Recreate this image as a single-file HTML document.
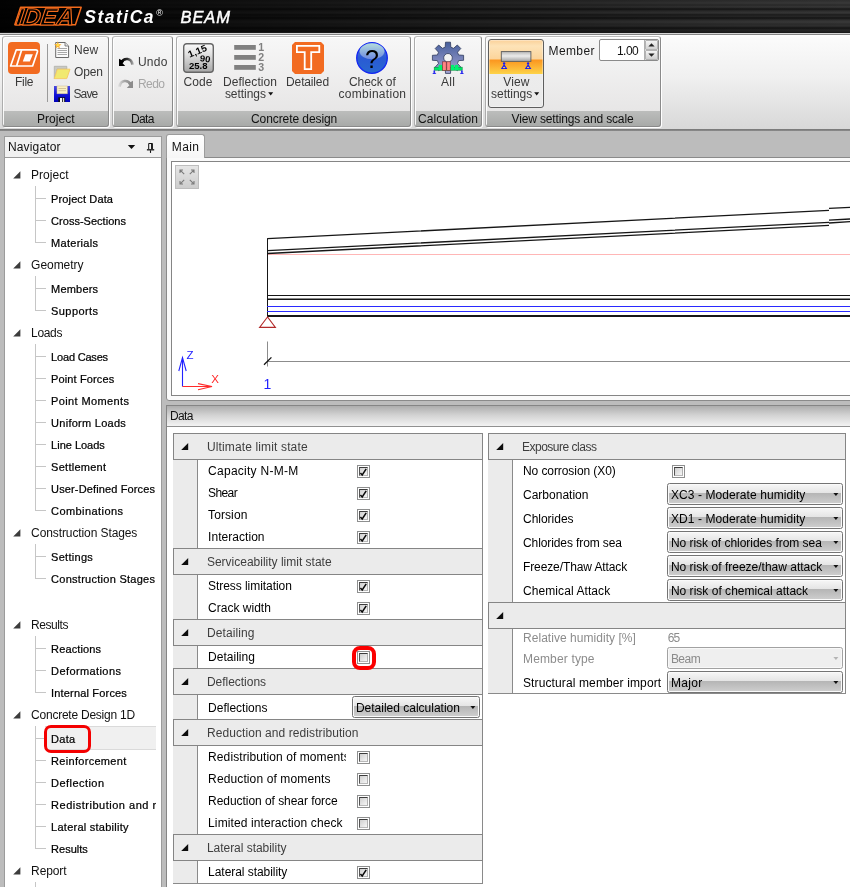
<!DOCTYPE html>
<html><head><meta charset="utf-8"><title>IDEA StatiCa BEAM</title>
<style>

html,body{margin:0;padding:0;}
body{width:850px;height:887px;overflow:hidden;position:relative;background:#bcbcbc;font-family:"Liberation Sans",sans-serif;font-size:12px;line-height:12px;color:#000;}
#app{position:absolute;left:0;top:0;width:850px;height:887px;overflow:hidden;will-change:transform;}
.a{position:absolute;box-sizing:border-box;}
.t{position:absolute;white-space:nowrap;font-size:12px;line-height:12px;}
svg{position:absolute;overflow:visible;}
.grp{position:absolute;box-sizing:border-box;border:1px solid;border-color:#bdbdbd #8a8a8a #8a8a8a #adadad;border-radius:3px;box-shadow:1px 1px 0 #fff,inset 1px 1px 0 rgba(255,255,255,0.9);background:linear-gradient(#f7f7f7,#e7e6e6 74px,#bcbdbc 74px,#a8aaa8);}
.hd{position:absolute;box-sizing:border-box;background:#ebebeb;border:1px solid #858585;}
.ind{position:absolute;box-sizing:border-box;background:#ebebeb;border-right:1px solid #8a8a8a;}
.dd{position:absolute;box-sizing:border-box;border:1px solid #747474;border-radius:2.5px;box-shadow:inset 0 0 0 1px #fafafa;background:linear-gradient(#f7f7f7 0,#e4e4e4 46%,#b5b5b5 46%,#cfcfcf 100%);}
.ddd{position:absolute;box-sizing:border-box;border:1px solid #a2a2a2;border-radius:2.5px;background:#efefef;box-shadow:inset 0 0 0 1px #f8f8f8;}
.cb{position:absolute;box-sizing:border-box;width:13px;height:13px;border:1px solid #8e8f8f;background:#fff;}
.cb i{position:absolute;left:1px;top:1px;width:9px;height:9px;box-sizing:border-box;border:1px solid;border-color:#3c3c3c #b0b0b0 #b8b8b8 #555;background:linear-gradient(135deg,#cfcfcf,#f6f6f6);}

</style></head><body><div id="app">
<div class="a" style="left:0px;top:0px;width:850px;height:33px;background:linear-gradient(90deg,rgba(0,0,0,0.96),rgba(0,0,0,0.5) 47%,rgba(0,0,0,0.08) 88%,rgba(0,0,0,0) 100%),linear-gradient(180deg,#2e2e2e 0px,#343434 2px,#3a3a3a 3px,#2a2a2a 5px,#383838 7px,#161616 9px,#2e2e2e 11px,#383838 13px,#181818 15px,#2c2c2c 16px,#141414 18px,#2e2e2e 20px,#3a3a3a 22px,#2c2c2c 24px,#303030 26px,#141414 28px,#262626 30px,#1a1a1a 33px);"></div>
<div class="a" style="left:0px;top:32px;width:850px;height:1px;background:#181818;"></div>
<div class="a" style="left:0px;top:33px;width:850px;height:1px;background:#d4d4d4;"></div>
<div class="a" style="left:0px;top:34px;width:850px;height:1px;background:#868686;"></div>
<svg style="left:0;top:0" width="240" height="33"><polygon points="20.6,7.2 81.2,7.2 75.4,24.8 14.8,24.8" fill="#000" stroke="#f26a1b" stroke-width="1.5" stroke-linejoin="round"/>
<g transform="translate(15.6,24.6) skewX(-7)"><text x="0" y="0" font-family="Liberation Sans, sans-serif" font-weight="bold" font-style="italic" font-size="23.6" textLength="58" lengthAdjust="spacingAndGlyphs" fill="#000" stroke="#f26a1b" stroke-width="1.1">IDEA</text></g></svg>
<span class="t" style="left:84.3px;top:8.7px;letter-spacing:1.50px;font-size:17.5px;line-height:17.5px;color:#fff;font-weight:bold;font-style:italic;">StatiCa</span>
<span class="t" style="left:156.3px;top:8.7px;font-size:9px;line-height:9px;color:#fff;">®</span>
<span class="t" style="left:180.5px;top:8.7px;letter-spacing:0.91px;font-size:16.5px;line-height:16.5px;color:#fff;font-style:italic;-webkit-text-stroke:0.45px #fff;">BEAM</span>
<div class="a" style="left:0px;top:35px;width:850px;height:94px;background:linear-gradient(#fff,#fbfbfb 2px,#f0f0f0 45%,#d8d8d8);"></div>
<div class="a" style="left:0px;top:129px;width:850px;height:2px;background:linear-gradient(#777,#8c8c8c);"></div>
<div class="grp" style="left:2px;top:36px;width:107px;height:91px"></div>
<div class="grp" style="left:112px;top:36px;width:61px;height:91px"></div>
<div class="grp" style="left:176px;top:36px;width:235px;height:91px"></div>
<div class="grp" style="left:414px;top:36px;width:68px;height:91px"></div>
<div class="grp" style="left:485px;top:36px;width:176px;height:91px"></div>
<svg style="left:8px;top:42px" width="32" height="32" viewBox="0 0 32 32"><rect width="32" height="32" rx="4" fill="#f26b21"/>
<path d="M8.3,7.8 H27.6 Q30.2,7.8 29.3,10.2 L24.6,24 H2.6 Z" fill="none" stroke="#fff" stroke-width="1.7" stroke-linejoin="round"/>
<path d="M13.6,8 L8.6,24" stroke="#fff" stroke-width="1.7"/>
<polygon points="17.4,12.2 24.9,12.2 21.8,19.6 14.8,19.6" fill="#fff"/></svg>
<span class="t" style="left:15.0px;top:75.8px;letter-spacing:-0.28px;color:#3a3a3a;">File</span>
<div class="a" style="left:47px;top:44px;width:1px;height:58px;background:#9a9a9a;"></div>
<svg style="left:54px;top:41px" width="17" height="18" viewBox="0 0 17 18">
<path d="M1.7,1.5 H11 L14.6,5 V16.5 H1.7 Z" fill="#fbfbfb" stroke="#6a6a6a" stroke-width="1"/>
<path d="M11,1.5 V5 H14.6" fill="#e4e4e4" stroke="#6a6a6a" stroke-width="0.8"/>
<path d="M3.5,7.5 H13 M3.5,9.5 H13 M3.5,11.5 H13 M3.5,13.5 H13" stroke="#a8a8a8" stroke-width="1"/>
<path d="M3.8,0.2 L4.7,2.9 L7.6,3.4 L5.3,5 L6,7.8 L3.8,6.1 L1.4,7.6 L2.3,4.9 L0,3.3 L2.9,3 Z" fill="#fbb034"/><circle cx="3.8" cy="4" r="1.3" fill="#ffe24a"/></svg>
<span class="t" style="left:73.9px;top:43.9px;letter-spacing:0.15px;color:#3a3a3a;">New</span>
<svg style="left:53px;top:65px" width="18" height="15" viewBox="0 0 18 15">
<path d="M1.3,1.3 H13.8 V4 H4 L1.3,13.5 Z" fill="#c9c9c3" stroke="#b0b0a8" stroke-width="0.8"/>
<polygon points="4.4,4.2 17,4.2 13.8,13.6 1.3,13.6" fill="#f1e96f" stroke="#f6c860" stroke-width="0.9"/></svg>
<span class="t" style="left:73.9px;top:65.9px;letter-spacing:-0.09px;color:#3a3a3a;">Open</span>
<svg style="left:54px;top:86px" width="16" height="16" viewBox="0 0 16 16"><defs><linearGradient id="sv" x1="0" y1="0" x2="0" y2="1"><stop offset="0" stop-color="#4a4ae0"/><stop offset="0.5" stop-color="#1414d8"/><stop offset="1" stop-color="#0000b8"/></linearGradient></defs>
<rect x="0" y="0" width="16" height="16" fill="url(#sv)"/>
<rect x="3" y="0" width="10.3" height="7.8" fill="#fbf0c4" stroke="#c9b98a" stroke-width="0.5"/>
<path d="M4.5,2.5 H12 M4.5,4.7 H12" stroke="#c8b98c" stroke-width="0.8"/>
<rect x="4.3" y="11.3" width="6.8" height="4.7" fill="#111"/><rect x="6" y="12" width="2.2" height="4" fill="#f4f4f4"/><rect x="9" y="12" width="1.2" height="4" fill="#ddd"/></svg>
<span class="t" style="left:73.5px;top:88.2px;letter-spacing:-0.88px;color:#3a3a3a;">Save</span>
<span class="t" style="left:37.0px;top:113.1px;letter-spacing:0.03px;color:#111;">Project</span>
<svg style="left:118px;top:56px" width="16" height="11" viewBox="0 0 16 11"><defs><linearGradient id="ug" x1="0" y1="0" x2="1" y2="0"><stop offset="0" stop-color="#000"/><stop offset="0.55" stop-color="#333"/><stop offset="1" stop-color="#999"/></linearGradient></defs>
<path d="M3.5,6.2 C6,1.6 13.6,1.6 14.4,8.6" fill="none" stroke="url(#ug)" stroke-width="2.6"/>
<polygon points="1,2.8 1,10 7.2,10 4.6,7.2 6,5.4" fill="#000"/></svg>
<span class="t" style="left:137.9px;top:56.4px;letter-spacing:0.27px;color:#3a3a3a;">Undo</span>
<svg style="left:118px;top:78px" width="16" height="11" viewBox="0 0 16 11"><defs><linearGradient id="rg" x1="1" y1="0" x2="0" y2="0"><stop offset="0" stop-color="#8c8c8c"/><stop offset="0.6" stop-color="#a8a8a8"/><stop offset="1" stop-color="#d4d4d4"/></linearGradient></defs>
<path d="M12.5,6.2 C10,1.6 2.4,1.6 1.6,8.6" fill="none" stroke="url(#rg)" stroke-width="2.6"/>
<polygon points="15,2.8 15,10 8.8,10 11.4,7.2 10,5.4" fill="#8c8c8c"/></svg>
<span class="t" style="left:137.9px;top:78.1px;letter-spacing:-0.53px;color:#a6a6a6;">Redo</span>
<span class="t" style="left:131.0px;top:113.1px;letter-spacing:-0.62px;color:#111;">Data</span>
<svg style="left:183px;top:43px" width="31" height="30" viewBox="0 0 31 30"><defs><linearGradient id="cg" x1="0" y1="0" x2="0" y2="1"><stop offset="0" stop-color="#fafafa"/><stop offset="0.35" stop-color="#e2e2e2"/><stop offset="1" stop-color="#a6a6a6"/></linearGradient></defs>
<rect x="0.7" y="0.7" width="29.6" height="28.6" rx="3" fill="url(#cg)" stroke="#666" stroke-width="1.4"/>
<g font-family="Liberation Sans, sans-serif" font-weight="bold" fill="#000">
<text x="6.6" y="14.8" font-size="9.4" transform="rotate(-22 6.6 14.8)" textLength="19.4" lengthAdjust="spacingAndGlyphs">1,15</text>
<text x="16.6" y="17.9" font-size="8.6" transform="rotate(8 16.6 17.9)" textLength="10.6" lengthAdjust="spacingAndGlyphs">90</text>
<text x="6" y="25.8" font-size="8.4" textLength="18.6" lengthAdjust="spacingAndGlyphs">25.8</text></g></svg>
<span class="t" style="left:183.5px;top:75.8px;letter-spacing:0.10px;color:#3a3a3a;">Code</span>
<svg style="left:232px;top:42px" width="34" height="30" viewBox="0 0 34 30"><g fill="#808080"><rect x="2.2" y="3" width="21.6" height="4.8"/><rect x="2.2" y="13" width="21.6" height="4.8"/><rect x="2.2" y="23" width="21.6" height="4.8"/></g>
<g font-family="Liberation Sans, sans-serif" font-weight="bold" font-size="10.6" fill="#808080"><text x="26.2" y="9.2">1</text><text x="26.2" y="19.2">2</text><text x="26.2" y="29.2">3</text></g></svg>
<span class="t" style="left:222.9px;top:75.8px;letter-spacing:0.08px;color:#3a3a3a;">Deflection</span>
<span class="t" style="left:224.9px;top:87.9px;letter-spacing:-0.04px;color:#3a3a3a;">settings</span>
<svg style="left:268px;top:92px" width="6" height="4"><polygon points="0.2,0.2 5.2,0.2 2.7,3.4" fill="#111"/></svg>
<svg style="left:292px;top:42px" width="32" height="32" viewBox="0 0 32 32"><path d="M3,0 H29 L32,3 V29 L29,32 H3 L0,29 V3 Z" fill="#f26b21"/>
<path d="M4.9,3.9 H27.3 V10.1 H19.2 V27.2 H12.7 V10.1 H4.9 Z" fill="none" stroke="#fff" stroke-width="1.8"/></svg>
<span class="t" style="left:286.1px;top:76.0px;letter-spacing:-0.15px;color:#3a3a3a;">Detailed</span>
<svg style="left:356px;top:42px" width="32" height="32" viewBox="0 0 32 32"><defs><linearGradient id="qg" x1="0" y1="0" x2="0" y2="1"><stop offset="0" stop-color="#5a7ae0"/><stop offset="0.5" stop-color="#2a5ad4"/><stop offset="1" stop-color="#2868d0"/></linearGradient>
<linearGradient id="qh" x1="0" y1="0" x2="0" y2="1"><stop offset="0" stop-color="#b4dcdc"/><stop offset="1" stop-color="#6c88e0"/></linearGradient></defs>
<circle cx="16" cy="16" r="15.3" fill="url(#qg)" stroke="#1226f2" stroke-width="1.3"/>
<ellipse cx="16" cy="9.3" rx="12.4" ry="8" fill="url(#qh)"/>
<text x="16" y="25.6" text-anchor="middle" font-family="Liberation Sans, sans-serif" font-size="25" fill="#000">?</text></svg>
<span class="t" style="left:349.0px;top:76.0px;letter-spacing:-0.08px;color:#3a3a3a;">Check of</span>
<span class="t" style="left:338.5px;top:88.0px;letter-spacing:0.28px;color:#3a3a3a;">combination</span>
<span class="t" style="left:251.0px;top:113.1px;letter-spacing:-0.08px;color:#111;">Concrete design</span>
<svg style="left:432px;top:42px" width="32" height="32" viewBox="0 0 32 32"><defs><linearGradient id="gg" x1="0" y1="0" x2="0" y2="1"><stop offset="0" stop-color="#465f9c"/><stop offset="1" stop-color="#a6a4d4"/></linearGradient></defs>
<polygon points="13.2,5.2 13.5,0.2 18.5,0.2 18.8,5.2 21.6,6.3 25.3,3.0 28.8,6.5 25.5,10.2 26.6,13.0 31.6,13.3 31.6,18.3 26.6,18.6 25.5,21.4 28.8,25.1 25.3,28.6 21.6,25.3 18.8,26.4 18.5,31.4 13.5,31.4 13.2,26.4 10.4,25.3 6.7,28.6 3.2,25.1 6.5,21.4 5.4,18.6 0.4,18.3 0.4,13.3 5.4,13.0 6.5,10.2 3.2,6.5 6.7,3.0 10.4,6.3" fill="url(#gg)" stroke="#2e3a5c" stroke-width="0.8" stroke-linejoin="round"/>
<circle cx="16" cy="15.8" r="4.3" fill="#f2f2f2" stroke="#2e3a5c" stroke-width="0.8"/>
<rect x="2.2" y="25.2" width="28" height="3" fill="#00e868" stroke="#0a8a3c" stroke-width="0.6"/>
<rect x="6.6" y="22.9" width="3.6" height="5.2" fill="#00f070"/><rect x="18.8" y="22.9" width="3.4" height="5.2" fill="#00f070"/><rect x="23" y="22.9" width="3.4" height="5.2" fill="#00f070"/>
<rect x="10.6" y="19.8" width="3.6" height="8.6" fill="#ff8484" stroke="#7a2a2a" stroke-width="0.6"/><rect x="14.8" y="19.8" width="3.4" height="8.6" fill="#ff8484" stroke="#7a2a2a" stroke-width="0.6"/>
<g fill="#2a2af0"><circle cx="2.3" cy="29.2" r="0.9"/><path d="M2.3,29.4 L0.3,32 H4.3 Z"/><circle cx="29.9" cy="29.2" r="0.9"/><path d="M29.9,29.4 L27.9,32 H31.9 Z"/></g></svg>
<span class="t" style="left:441.1px;top:76.0px;letter-spacing:0.23px;color:#3a3a3a;">All</span>
<span class="t" style="left:418.0px;top:113.1px;letter-spacing:0.06px;color:#111;">Calculation</span>
<div class="a" style="left:488px;top:39px;width:56px;height:69px;border:1px solid #5e5e5e;border-radius:3px;background:linear-gradient(#fbd199 0,#fde3b8 6px,#fcd49a 19px,#fb961f 20px,#fcb838 28px,#fdd348 34px,#ececec 34px,#eaeaea 100%);box-shadow:inset 0 0 0 1px rgba(255,255,255,0.35);"></div>
<svg style="left:498px;top:50px" width="36" height="21" viewBox="0 0 36 21"><defs><linearGradient id="bg" x1="0" y1="0" x2="0" y2="1"><stop offset="0" stop-color="#b8b8b8"/><stop offset="0.45" stop-color="#ebebeb"/><stop offset="1" stop-color="#a2a2a2"/></linearGradient></defs>
<rect x="3.3" y="1.6" width="29.6" height="9.8" fill="url(#bg)" stroke="#5c5c5c" stroke-width="0.9"/>
<g fill="#1c1cf0"><circle cx="6.1" cy="13.4" r="1.2"/><path d="M6.1,14 L2.8,19 H9.4 Z"/><circle cx="30.1" cy="13.4" r="1.2"/><path d="M30.1,14 L26.8,19 H33.4 Z"/></g>
<g fill="#fbd048"><ellipse cx="6.1" cy="17.5" rx="1.2" ry="0.7"/><ellipse cx="30.1" cy="17.5" rx="1.2" ry="0.7"/></g></svg>
<span class="t" style="left:503.3px;top:76.0px;letter-spacing:0.10px;color:#3a3a3a;">View</span>
<span class="t" style="left:491.0px;top:88.0px;letter-spacing:-0.01px;color:#3a3a3a;">settings</span>
<svg style="left:534px;top:92px" width="6" height="4"><polygon points="0.2,0.2 5.2,0.2 2.7,3.4" fill="#111"/></svg>
<span class="t" style="left:548.5px;top:45.2px;letter-spacing:0.40px;color:#1a1a1a;">Member</span>
<div class="a" style="left:599px;top:39px;width:60px;height:22px;border:1px solid #8a8a8a;border-radius:2px;background:#fff;"></div>
<div class="a" style="left:644px;top:40px;width:1px;height:20px;background:#b0b0b0;"></div>
<div class="a" style="left:645px;top:40px;width:13px;height:10px;background:linear-gradient(#f4f4f4,#d2d2d2);border:1px solid #b4b4b4;border-radius:1px;"></div>
<div class="a" style="left:645px;top:50px;width:13px;height:10px;background:linear-gradient(#f4f4f4,#cfcfcf);border:1px solid #b4b4b4;border-radius:1px;"></div>
<svg style="left:648px;top:43px" width="8" height="16"><polygon points="3.5,0.3 6.6,3.6 0.4,3.6" fill="#222"/><polygon points="0.4,10.4 6.6,10.4 3.5,13.7" fill="#222"/></svg>
<span class="t" style="left:616.9px;top:45.2px;letter-spacing:-0.49px;color:#111;">1.00</span>
<span class="t" style="left:511.5px;top:113.1px;letter-spacing:-0.14px;color:#111;">View settings and scale</span>
<div class="a" style="left:4px;top:136px;width:158px;height:760px;border:1px solid #9b9b9b;background:#fff;"></div>
<div class="a" style="left:5px;top:137px;width:156px;height:20px;background:#f1f1f1;"></div>
<div class="a" style="left:5px;top:157px;width:156px;height:1px;background:#9b9b9b;"></div>
<span class="t" style="left:8.0px;top:141.3px;letter-spacing:0.14px;color:#111;">Navigator</span>
<svg style="left:127px;top:144px" width="9" height="6"><polygon points="0.8,0.9 8.2,0.9 4.5,5.1" fill="#111"/></svg>
<svg style="left:146px;top:142px" width="10" height="12" viewBox="0 0 10 12"><path d="M2.7,7 V1.5 H6 V7" fill="none" stroke="#111" stroke-width="1"/><path d="M6,1.2 V7.2" stroke="#111" stroke-width="1.7"/><path d="M0.9,7.8 H8.2" stroke="#111" stroke-width="1.3"/><path d="M4.5,8.3 V10.9" stroke="#111" stroke-width="1.1"/></svg>
<svg style="left:13px;top:171px" width="8" height="8"><polygon points="7.4,0.2 7.4,7.4 0.2,7.4" fill="#3c3c3c"/></svg>
<span class="t" style="left:31.1px;top:168.8px;letter-spacing:0.01px;color:#111;">Project</span>
<div class="a" style="left:36px;top:198px;width:10px;height:1px;background:#c6c6c6;"></div>
<span class="t" style="left:51.1px;top:194.4px;letter-spacing:0.12px;font-size:11px;line-height:11px;color:#000;-webkit-text-stroke:0.22px #000;">Project Data</span>
<div class="a" style="left:36px;top:220px;width:10px;height:1px;background:#c6c6c6;"></div>
<span class="t" style="left:51.1px;top:216.4px;letter-spacing:0.02px;font-size:11px;line-height:11px;color:#000;-webkit-text-stroke:0.22px #000;">Cross-Sections</span>
<div class="a" style="left:36px;top:242px;width:10px;height:1px;background:#c6c6c6;"></div>
<span class="t" style="left:51.1px;top:238.4px;letter-spacing:0.27px;font-size:11px;line-height:11px;color:#000;-webkit-text-stroke:0.22px #000;">Materials</span>
<div class="a" style="left:35px;top:186px;width:1px;height:57px;background:#c6c6c6;"></div>
<svg style="left:13px;top:261px" width="8" height="8"><polygon points="7.4,0.2 7.4,7.4 0.2,7.4" fill="#3c3c3c"/></svg>
<span class="t" style="left:31.1px;top:258.8px;letter-spacing:-0.05px;color:#111;">Geometry</span>
<div class="a" style="left:36px;top:288px;width:10px;height:1px;background:#c6c6c6;"></div>
<span class="t" style="left:51.1px;top:284.4px;letter-spacing:0.18px;font-size:11px;line-height:11px;color:#000;-webkit-text-stroke:0.22px #000;">Members</span>
<div class="a" style="left:36px;top:310px;width:10px;height:1px;background:#c6c6c6;"></div>
<span class="t" style="left:51.1px;top:306.4px;letter-spacing:0.41px;font-size:11px;line-height:11px;color:#000;-webkit-text-stroke:0.22px #000;">Supports</span>
<div class="a" style="left:35px;top:276px;width:1px;height:35px;background:#c6c6c6;"></div>
<svg style="left:13px;top:329px" width="8" height="8"><polygon points="7.4,0.2 7.4,7.4 0.2,7.4" fill="#3c3c3c"/></svg>
<span class="t" style="left:31.1px;top:326.8px;letter-spacing:-0.35px;color:#111;">Loads</span>
<div class="a" style="left:36px;top:356px;width:10px;height:1px;background:#c6c6c6;"></div>
<span class="t" style="left:51.1px;top:352.4px;letter-spacing:-0.19px;font-size:11px;line-height:11px;color:#000;-webkit-text-stroke:0.22px #000;">Load Cases</span>
<div class="a" style="left:36px;top:378px;width:10px;height:1px;background:#c6c6c6;"></div>
<span class="t" style="left:51.1px;top:374.4px;letter-spacing:0.12px;font-size:11px;line-height:11px;color:#000;-webkit-text-stroke:0.22px #000;">Point Forces</span>
<div class="a" style="left:36px;top:400px;width:10px;height:1px;background:#c6c6c6;"></div>
<span class="t" style="left:51.1px;top:396.4px;letter-spacing:0.37px;font-size:11px;line-height:11px;color:#000;-webkit-text-stroke:0.22px #000;">Point Moments</span>
<div class="a" style="left:36px;top:422px;width:10px;height:1px;background:#c6c6c6;"></div>
<span class="t" style="left:51.1px;top:418.4px;letter-spacing:0.27px;font-size:11px;line-height:11px;color:#000;-webkit-text-stroke:0.22px #000;">Uniform Loads</span>
<div class="a" style="left:36px;top:444px;width:10px;height:1px;background:#c6c6c6;"></div>
<span class="t" style="left:51.1px;top:440.4px;letter-spacing:-0.01px;font-size:11px;line-height:11px;color:#000;-webkit-text-stroke:0.22px #000;">Line Loads</span>
<div class="a" style="left:36px;top:466px;width:10px;height:1px;background:#c6c6c6;"></div>
<span class="t" style="left:51.1px;top:462.4px;letter-spacing:0.26px;font-size:11px;line-height:11px;color:#000;-webkit-text-stroke:0.22px #000;">Settlement</span>
<div class="a" style="left:36px;top:488px;width:10px;height:1px;background:#c6c6c6;"></div>
<span class="t" style="left:51.1px;top:484.4px;letter-spacing:0.13px;font-size:11px;line-height:11px;color:#000;-webkit-text-stroke:0.22px #000;">User-Defined Forces</span>
<div class="a" style="left:36px;top:510px;width:10px;height:1px;background:#c6c6c6;"></div>
<span class="t" style="left:51.1px;top:506.4px;letter-spacing:0.42px;font-size:11px;line-height:11px;color:#000;-webkit-text-stroke:0.22px #000;">Combinations</span>
<div class="a" style="left:35px;top:344px;width:1px;height:167px;background:#c6c6c6;"></div>
<svg style="left:13px;top:529px" width="8" height="8"><polygon points="7.4,0.2 7.4,7.4 0.2,7.4" fill="#3c3c3c"/></svg>
<span class="t" style="left:31.1px;top:526.8px;letter-spacing:-0.10px;color:#111;">Construction Stages</span>
<div class="a" style="left:36px;top:556px;width:10px;height:1px;background:#c6c6c6;"></div>
<span class="t" style="left:51.1px;top:552.4px;letter-spacing:0.28px;font-size:11px;line-height:11px;color:#000;-webkit-text-stroke:0.22px #000;">Settings</span>
<div class="a" style="left:36px;top:578px;width:10px;height:1px;background:#c6c6c6;"></div>
<span class="t" style="left:51.1px;top:574.4px;letter-spacing:0.27px;font-size:11px;line-height:11px;color:#000;-webkit-text-stroke:0.22px #000;">Construction Stages</span>
<div class="a" style="left:35px;top:544px;width:1px;height:35px;background:#c6c6c6;"></div>
<svg style="left:13px;top:621px" width="8" height="8"><polygon points="7.4,0.2 7.4,7.4 0.2,7.4" fill="#3c3c3c"/></svg>
<span class="t" style="left:31.1px;top:618.8px;letter-spacing:-0.44px;color:#111;">Results</span>
<div class="a" style="left:36px;top:648px;width:10px;height:1px;background:#c6c6c6;"></div>
<span class="t" style="left:51.1px;top:644.4px;letter-spacing:0.12px;font-size:11px;line-height:11px;color:#000;-webkit-text-stroke:0.22px #000;">Reactions</span>
<div class="a" style="left:36px;top:670px;width:10px;height:1px;background:#c6c6c6;"></div>
<span class="t" style="left:51.1px;top:666.4px;letter-spacing:0.40px;font-size:11px;line-height:11px;color:#000;-webkit-text-stroke:0.22px #000;">Deformations</span>
<div class="a" style="left:36px;top:692px;width:10px;height:1px;background:#c6c6c6;"></div>
<span class="t" style="left:51.1px;top:688.4px;letter-spacing:0.17px;font-size:11px;line-height:11px;color:#000;-webkit-text-stroke:0.22px #000;">Internal Forces</span>
<div class="a" style="left:35px;top:636px;width:1px;height:57px;background:#c6c6c6;"></div>
<svg style="left:13px;top:711px" width="8" height="8"><polygon points="7.4,0.2 7.4,7.4 0.2,7.4" fill="#3c3c3c"/></svg>
<span class="t" style="left:31.1px;top:708.8px;letter-spacing:-0.24px;color:#111;">Concrete Design 1D</span>
<div class="a" style="left:45px;top:726px;width:111px;height:24px;background:#f0f0f0;border-top:1px solid #dadada;border-bottom:1px solid #dadada;"></div>
<div class="a" style="left:36px;top:738px;width:10px;height:1px;background:#c6c6c6;"></div>
<span class="t" style="left:51.1px;top:734.4px;letter-spacing:0.25px;font-size:11px;line-height:11px;color:#000;-webkit-text-stroke:0.22px #000;">Data</span>
<div class="a" style="left:36px;top:760px;width:10px;height:1px;background:#c6c6c6;"></div>
<span class="t" style="left:51.1px;top:756.4px;letter-spacing:0.30px;font-size:11px;line-height:11px;color:#000;-webkit-text-stroke:0.22px #000;">Reinforcement</span>
<div class="a" style="left:36px;top:782px;width:10px;height:1px;background:#c6c6c6;"></div>
<span class="t" style="left:51.1px;top:778.4px;letter-spacing:0.45px;font-size:11px;line-height:11px;color:#000;-webkit-text-stroke:0.22px #000;">Deflection</span>
<div class="a" style="left:36px;top:804px;width:10px;height:1px;background:#c6c6c6;"></div>
<div class="a" style="left:45px;top:794px;width:111px;height:20px;overflow:hidden">

<span class="t" style="left:6.1px;top:6.4px;letter-spacing:0.51px;font-size:11px;line-height:11px;color:#000;-webkit-text-stroke:0.22px #000;">Redistribution and r</span>
</div>
<div class="a" style="left:36px;top:826px;width:10px;height:1px;background:#c6c6c6;"></div>
<span class="t" style="left:51.1px;top:822.4px;letter-spacing:0.25px;font-size:11px;line-height:11px;color:#000;-webkit-text-stroke:0.22px #000;">Lateral stability</span>
<div class="a" style="left:36px;top:848px;width:10px;height:1px;background:#c6c6c6;"></div>
<span class="t" style="left:51.1px;top:844.4px;letter-spacing:-0.01px;font-size:11px;line-height:11px;color:#000;-webkit-text-stroke:0.22px #000;">Results</span>
<div class="a" style="left:35px;top:726px;width:1px;height:123px;background:#c6c6c6;"></div>
<svg style="left:13px;top:867px" width="8" height="8"><polygon points="7.4,0.2 7.4,7.4 0.2,7.4" fill="#3c3c3c"/></svg>
<span class="t" style="left:31.1px;top:864.8px;letter-spacing:-0.12px;color:#111;">Report</span>
<div class="a" style="left:36px;top:894px;width:10px;height:1px;background:#c6c6c6;"></div>
<div class="a" style="left:35px;top:882px;width:1px;height:30px;background:#c6c6c6;"></div>
<div class="a" style="left:44px;top:724.5px;width:47px;height:28px;border:3px solid #f40000;border-radius:7px;"></div>
<div class="a" style="left:166px;top:157px;width:690px;height:244px;border:1px solid #8a8a8a;background:#fafafa;border-radius:0 0 0 3px;"></div>
<div class="a" style="left:166px;top:134px;width:39px;height:24px;border:1px solid #9c9c9c;border-bottom:none;border-radius:3px 3px 0 0;background:linear-gradient(#ffffff,#f6f6f6);"></div>
<span class="t" style="left:171.8px;top:141.1px;letter-spacing:0.40px;color:#111;">Main</span>
<div class="a" style="left:171px;top:161px;width:690px;height:235px;border:1px solid #858585;background:#fff;"></div>
<div class="a" style="left:175px;top:165px;width:24px;height:24px;border:1px solid #bdbdbd;background:linear-gradient(#e6e6e6,#cdcdcd);"></div>
<svg style="left:175px;top:165px" width="24" height="24" viewBox="0 0 24 24"><g stroke="#7a7a7a" stroke-width="1.1" fill="none">
<path d="M9.2,9.2 L5.2,5.2 M5,8 V5 H8"/><path d="M14.8,9.2 L18.8,5.2 M16,5 H19 V8"/><path d="M9.2,14.8 L5.2,18.8 M5,16 V19 H8"/><path d="M14.8,14.8 L18.8,18.8 M16,19 H19 V16"/></g></svg>
<svg style="left:172px;top:162px" width="678" height="233" viewBox="172 162 678 233">
<path d="M267,254.5 H850" stroke="#ffb6b6" stroke-width="1"/>
<g fill="none" stroke="#161616" stroke-width="1">
<path d="M267.5,238.2 V316"/>
<path d="M267.5,238.7 L829,210.4 M829,208.3 L850,207.3" stroke-width="1.3"/>
<path d="M267.5,250.7 L829,222.4 M829,220.1 L850,219" stroke-width="1.3"/>
<path d="M267.5,253.5 L829,225.4 M829,223 L850,221.6" stroke-width="1.3"/>
<path d="M267,295.5 H850" stroke-width="1"/>
<path d="M267,299.2 H850" stroke-width="1.6"/>
<path d="M267,316 H850" stroke-width="2"/>
</g>
<path d="M267,306.5 H850 M267,311.5 H850" stroke="#2a2aff" stroke-width="1.1"/>
<path d="M267.5,317 L259.6,327.4 H275.4 Z" fill="none" stroke="#b22a2a" stroke-width="1.1"/>
<path d="M267.5,341.5 V366.5 M267.5,361.5 H850" stroke="#8c8c8c" stroke-width="1" fill="none"/>
<path d="M264,364.8 L271.4,357.4" stroke="#111" stroke-width="1.3"/>
<g fill="none" stroke-width="1.1"><path d="M182.5,386.5 V357.5 M178.8,371 L182.5,357.5 L186.2,371" stroke="#2222ff"/>
<path d="M182.5,386.5 H212 M198,383.6 L212,386.5 L198,389.8" stroke="#ff2a2a"/></g>
<g font-family="Liberation Sans, sans-serif">
<text x="186.6" y="358.6" font-size="11.5" fill="#2222ff">Z</text>
<text x="211.3" y="383" font-size="11.5" fill="#ff2a2a">X</text>
<text x="263.6" y="388.6" font-size="14" fill="#2222ff">1</text></g>
</svg>
<div class="a" style="left:166px;top:405px;width:690px;height:490px;border:1px solid #858585;background:#fff;"></div>
<div class="a" style="left:167px;top:406px;width:690px;height:20px;background:linear-gradient(#adadad,#d2d2d2 45%,#f3f3f3);"></div>
<div class="a" style="left:167px;top:426px;width:690px;height:1px;background:#909090;"></div>
<span class="t" style="left:169.9px;top:409.9px;letter-spacing:-0.58px;color:#111;">Data</span>
<div class="a" style="left:482px;top:433px;width:1px;height:451px;background:#8a8a8a;"></div>
<div class="a" style="left:173px;top:883px;width:310px;height:1px;background:#8a8a8a;"></div>
<div class="ind" style="left:173px;top:433px;width:25px;height:450px"></div>
<div class="hd" style="left:173px;top:433px;width:310px;height:27px"></div>
<svg style="left:181px;top:443px" width="8" height="8"><polygon points="7.2,0 7.2,7 0.2,7" fill="#0c0c0c"/></svg>
<span class="t" style="left:206.9px;top:441.1px;letter-spacing:0.14px;color:#3e3e3e;">Ultimate limit state</span>
<span class="t" style="left:208.1px;top:464.8px;letter-spacing:0.26px;">Capacity N-M-M</span>
<div class="cb" style="left:357px;top:465px"><i></i><svg style="left:-1px;top:-1px" width="13" height="13" viewBox="0 0 13 13"><path d="M3.4,7.9 L5.2,10 L9.2,3.9" fill="none" stroke="#0a0a0a" stroke-width="1.5" stroke-linejoin="miter"/></svg></div>
<span class="t" style="left:208.1px;top:486.8px;letter-spacing:-0.61px;">Shear</span>
<div class="cb" style="left:357px;top:487px"><i></i><svg style="left:-1px;top:-1px" width="13" height="13" viewBox="0 0 13 13"><path d="M3.4,7.9 L5.2,10 L9.2,3.9" fill="none" stroke="#0a0a0a" stroke-width="1.5" stroke-linejoin="miter"/></svg></div>
<span class="t" style="left:208.1px;top:508.8px;letter-spacing:0.09px;">Torsion</span>
<div class="cb" style="left:357px;top:509px"><i></i><svg style="left:-1px;top:-1px" width="13" height="13" viewBox="0 0 13 13"><path d="M3.4,7.9 L5.2,10 L9.2,3.9" fill="none" stroke="#0a0a0a" stroke-width="1.5" stroke-linejoin="miter"/></svg></div>
<span class="t" style="left:208.1px;top:530.8px;letter-spacing:0.04px;">Interaction</span>
<div class="cb" style="left:357px;top:531px"><i></i><svg style="left:-1px;top:-1px" width="13" height="13" viewBox="0 0 13 13"><path d="M3.4,7.9 L5.2,10 L9.2,3.9" fill="none" stroke="#0a0a0a" stroke-width="1.5" stroke-linejoin="miter"/></svg></div>
<div class="hd" style="left:173px;top:548px;width:310px;height:27px"></div>
<svg style="left:181px;top:558px" width="8" height="8"><polygon points="7.2,0 7.2,7 0.2,7" fill="#0c0c0c"/></svg>
<span class="t" style="left:206.9px;top:556.1px;letter-spacing:-0.00px;color:#3e3e3e;">Serviceability limit state</span>
<span class="t" style="left:208.1px;top:579.8px;letter-spacing:-0.06px;">Stress limitation</span>
<div class="cb" style="left:357px;top:580px"><i></i><svg style="left:-1px;top:-1px" width="13" height="13" viewBox="0 0 13 13"><path d="M3.4,7.9 L5.2,10 L9.2,3.9" fill="none" stroke="#0a0a0a" stroke-width="1.5" stroke-linejoin="miter"/></svg></div>
<span class="t" style="left:208.1px;top:601.8px;letter-spacing:0.01px;">Crack width</span>
<div class="cb" style="left:357px;top:602px"><i></i><svg style="left:-1px;top:-1px" width="13" height="13" viewBox="0 0 13 13"><path d="M3.4,7.9 L5.2,10 L9.2,3.9" fill="none" stroke="#0a0a0a" stroke-width="1.5" stroke-linejoin="miter"/></svg></div>
<div class="hd" style="left:173px;top:619px;width:310px;height:27px"></div>
<svg style="left:181px;top:629px" width="8" height="8"><polygon points="7.2,0 7.2,7 0.2,7" fill="#0c0c0c"/></svg>
<span class="t" style="left:206.9px;top:627.1px;letter-spacing:0.11px;color:#3e3e3e;">Detailing</span>
<span class="t" style="left:208.1px;top:650.8px;letter-spacing:0.01px;">Detailing</span>
<div class="cb" style="left:357px;top:651px"><i></i></div>
<div class="a" style="left:352px;top:646px;width:24px;height:24px;border:4px solid #fb0000;border-radius:8px;z-index:5;"></div>
<div class="hd" style="left:173px;top:668px;width:310px;height:27px"></div>
<svg style="left:181px;top:678px" width="8" height="8"><polygon points="7.2,0 7.2,7 0.2,7" fill="#0c0c0c"/></svg>
<span class="t" style="left:206.9px;top:676.1px;letter-spacing:-0.02px;color:#3e3e3e;">Deflections</span>
<span class="t" style="left:208.1px;top:702.1px;letter-spacing:0.00px;">Deflections</span>
<div class="dd" style="left:352px;top:696px;width:128px;height:22px"></div>
<span class="t" style="left:355.9px;top:702.2px;letter-spacing:0.00px;color:#000;">Detailed calculation</span>
<svg style="left:470px;top:706px" width="6" height="4"><polygon points="0.4,0 5.4,0 2.9,3" fill="#111"/></svg>
<div class="hd" style="left:173px;top:719px;width:310px;height:27px"></div>
<svg style="left:181px;top:729px" width="8" height="8"><polygon points="7.2,0 7.2,7 0.2,7" fill="#0c0c0c"/></svg>
<span class="t" style="left:206.9px;top:727.1px;letter-spacing:0.08px;color:#3e3e3e;">Reduction and redistribution</span>
<div class="a" style="left:200px;top:748px;width:146.4px;height:18px;overflow:hidden">
<span class="t" style="left:8.1px;top:2.8px;color:#000;letter-spacing:0.09px;">Redistribution of moments</span>
</div>
<div class="cb" style="left:357px;top:751px"><i></i></div>
<span class="t" style="left:208.1px;top:772.8px;letter-spacing:0.12px;">Reduction of moments</span>
<div class="cb" style="left:357px;top:773px"><i></i></div>
<span class="t" style="left:208.1px;top:794.8px;letter-spacing:-0.05px;">Reduction of shear force</span>
<div class="cb" style="left:357px;top:795px"><i></i></div>
<span class="t" style="left:208.1px;top:816.8px;letter-spacing:0.10px;">Limited interaction check</span>
<div class="cb" style="left:357px;top:817px"><i></i></div>
<div class="hd" style="left:173px;top:834px;width:310px;height:27px"></div>
<svg style="left:181px;top:844px" width="8" height="8"><polygon points="7.2,0 7.2,7 0.2,7" fill="#0c0c0c"/></svg>
<span class="t" style="left:206.9px;top:842.1px;letter-spacing:-0.03px;color:#3e3e3e;">Lateral stability</span>
<span class="t" style="left:208.1px;top:865.8px;letter-spacing:-0.05px;">Lateral stability</span>
<div class="cb" style="left:357px;top:866px"><i></i><svg style="left:-1px;top:-1px" width="13" height="13" viewBox="0 0 13 13"><path d="M3.4,7.9 L5.2,10 L9.2,3.9" fill="none" stroke="#0a0a0a" stroke-width="1.5" stroke-linejoin="miter"/></svg></div>
<div class="a" style="left:845px;top:433px;width:1px;height:261px;background:#8a8a8a;"></div>
<div class="a" style="left:488px;top:693px;width:358px;height:1px;background:#8a8a8a;"></div>
<div class="ind" style="left:488px;top:433px;width:25px;height:260px"></div>
<div class="hd" style="left:488px;top:433px;width:358px;height:27px"></div>
<svg style="left:496px;top:443px" width="8" height="8"><polygon points="7.2,0 7.2,7 0.2,7" fill="#0c0c0c"/></svg>
<span class="t" style="left:521.9px;top:441.1px;letter-spacing:-0.48px;color:#3e3e3e;">Exposure class</span>
<span class="t" style="left:523.0px;top:464.8px;letter-spacing:-0.08px;">No corrosion (X0)</span>
<div class="cb" style="left:672px;top:465px"><i></i></div>
<span class="t" style="left:523.0px;top:488.8px;letter-spacing:0.01px;">Carbonation</span>
<div class="dd" style="left:667px;top:483px;width:176px;height:22px"></div>
<span class="t" style="left:670.9px;top:489.2px;letter-spacing:0.08px;color:#000;">XC3 - Moderate humidity</span>
<svg style="left:833px;top:493px" width="6" height="4"><polygon points="0.4,0 5.4,0 2.9,3" fill="#111"/></svg>
<span class="t" style="left:523.0px;top:512.8px;letter-spacing:-0.02px;">Chlorides</span>
<div class="dd" style="left:667px;top:507px;width:176px;height:22px"></div>
<span class="t" style="left:670.9px;top:513.2px;letter-spacing:0.08px;color:#000;">XD1 - Moderate humidity</span>
<svg style="left:833px;top:517px" width="6" height="4"><polygon points="0.4,0 5.4,0 2.9,3" fill="#111"/></svg>
<span class="t" style="left:523.0px;top:536.8px;letter-spacing:-0.10px;">Chlorides from sea</span>
<div class="dd" style="left:667px;top:531px;width:176px;height:22px"></div>
<span class="t" style="left:670.9px;top:537.2px;letter-spacing:-0.04px;color:#000;">No risk of chlorides from sea</span>
<svg style="left:833px;top:541px" width="6" height="4"><polygon points="0.4,0 5.4,0 2.9,3" fill="#111"/></svg>
<span class="t" style="left:523.0px;top:560.8px;letter-spacing:-0.11px;">Freeze/Thaw Attack</span>
<div class="dd" style="left:667px;top:555px;width:176px;height:22px"></div>
<span class="t" style="left:670.9px;top:561.2px;letter-spacing:-0.00px;color:#000;">No risk of freeze/thaw attack</span>
<svg style="left:833px;top:565px" width="6" height="4"><polygon points="0.4,0 5.4,0 2.9,3" fill="#111"/></svg>
<span class="t" style="left:523.0px;top:584.8px;letter-spacing:0.08px;">Chemical Attack</span>
<div class="dd" style="left:667px;top:579px;width:176px;height:22px"></div>
<span class="t" style="left:670.9px;top:585.2px;letter-spacing:0.02px;color:#000;">No risk of chemical attack</span>
<svg style="left:833px;top:589px" width="6" height="4"><polygon points="0.4,0 5.4,0 2.9,3" fill="#111"/></svg>
<div class="hd" style="left:488px;top:602px;width:358px;height:27px"></div>
<svg style="left:496px;top:612px" width="8" height="8"><polygon points="7.2,0 7.2,7 0.2,7" fill="#0c0c0c"/></svg>
<span class="t" style="left:523.0px;top:632.0px;letter-spacing:0.04px;color:#8c8c8c;">Relative humidity [%]</span>
<span class="t" style="left:667.8px;top:632.0px;letter-spacing:-0.95px;color:#8c8c8c;">65</span>
<span class="t" style="left:523.0px;top:652.5px;letter-spacing:0.15px;color:#8c8c8c;">Member type</span>
<div class="ddd" style="left:667px;top:647px;width:176px;height:22px"></div>
<span class="t" style="left:670.9px;top:653.3px;letter-spacing:-0.52px;color:#8a8a8a;">Beam</span>
<svg style="left:833px;top:657px" width="6" height="4"><polygon points="0.4,0 5.4,0 2.9,3" fill="#b4b4b4"/></svg>
<span class="t" style="left:523.0px;top:677.2px;letter-spacing:0.12px;">Structural member import</span>
<div class="dd" style="left:667px;top:671px;width:176px;height:22px"></div>
<span class="t" style="left:670.9px;top:677.2px;letter-spacing:0.35px;color:#000;">Major</span>
<svg style="left:833px;top:681px" width="6" height="4"><polygon points="0.4,0 5.4,0 2.9,3" fill="#111"/></svg>
</div></body></html>
